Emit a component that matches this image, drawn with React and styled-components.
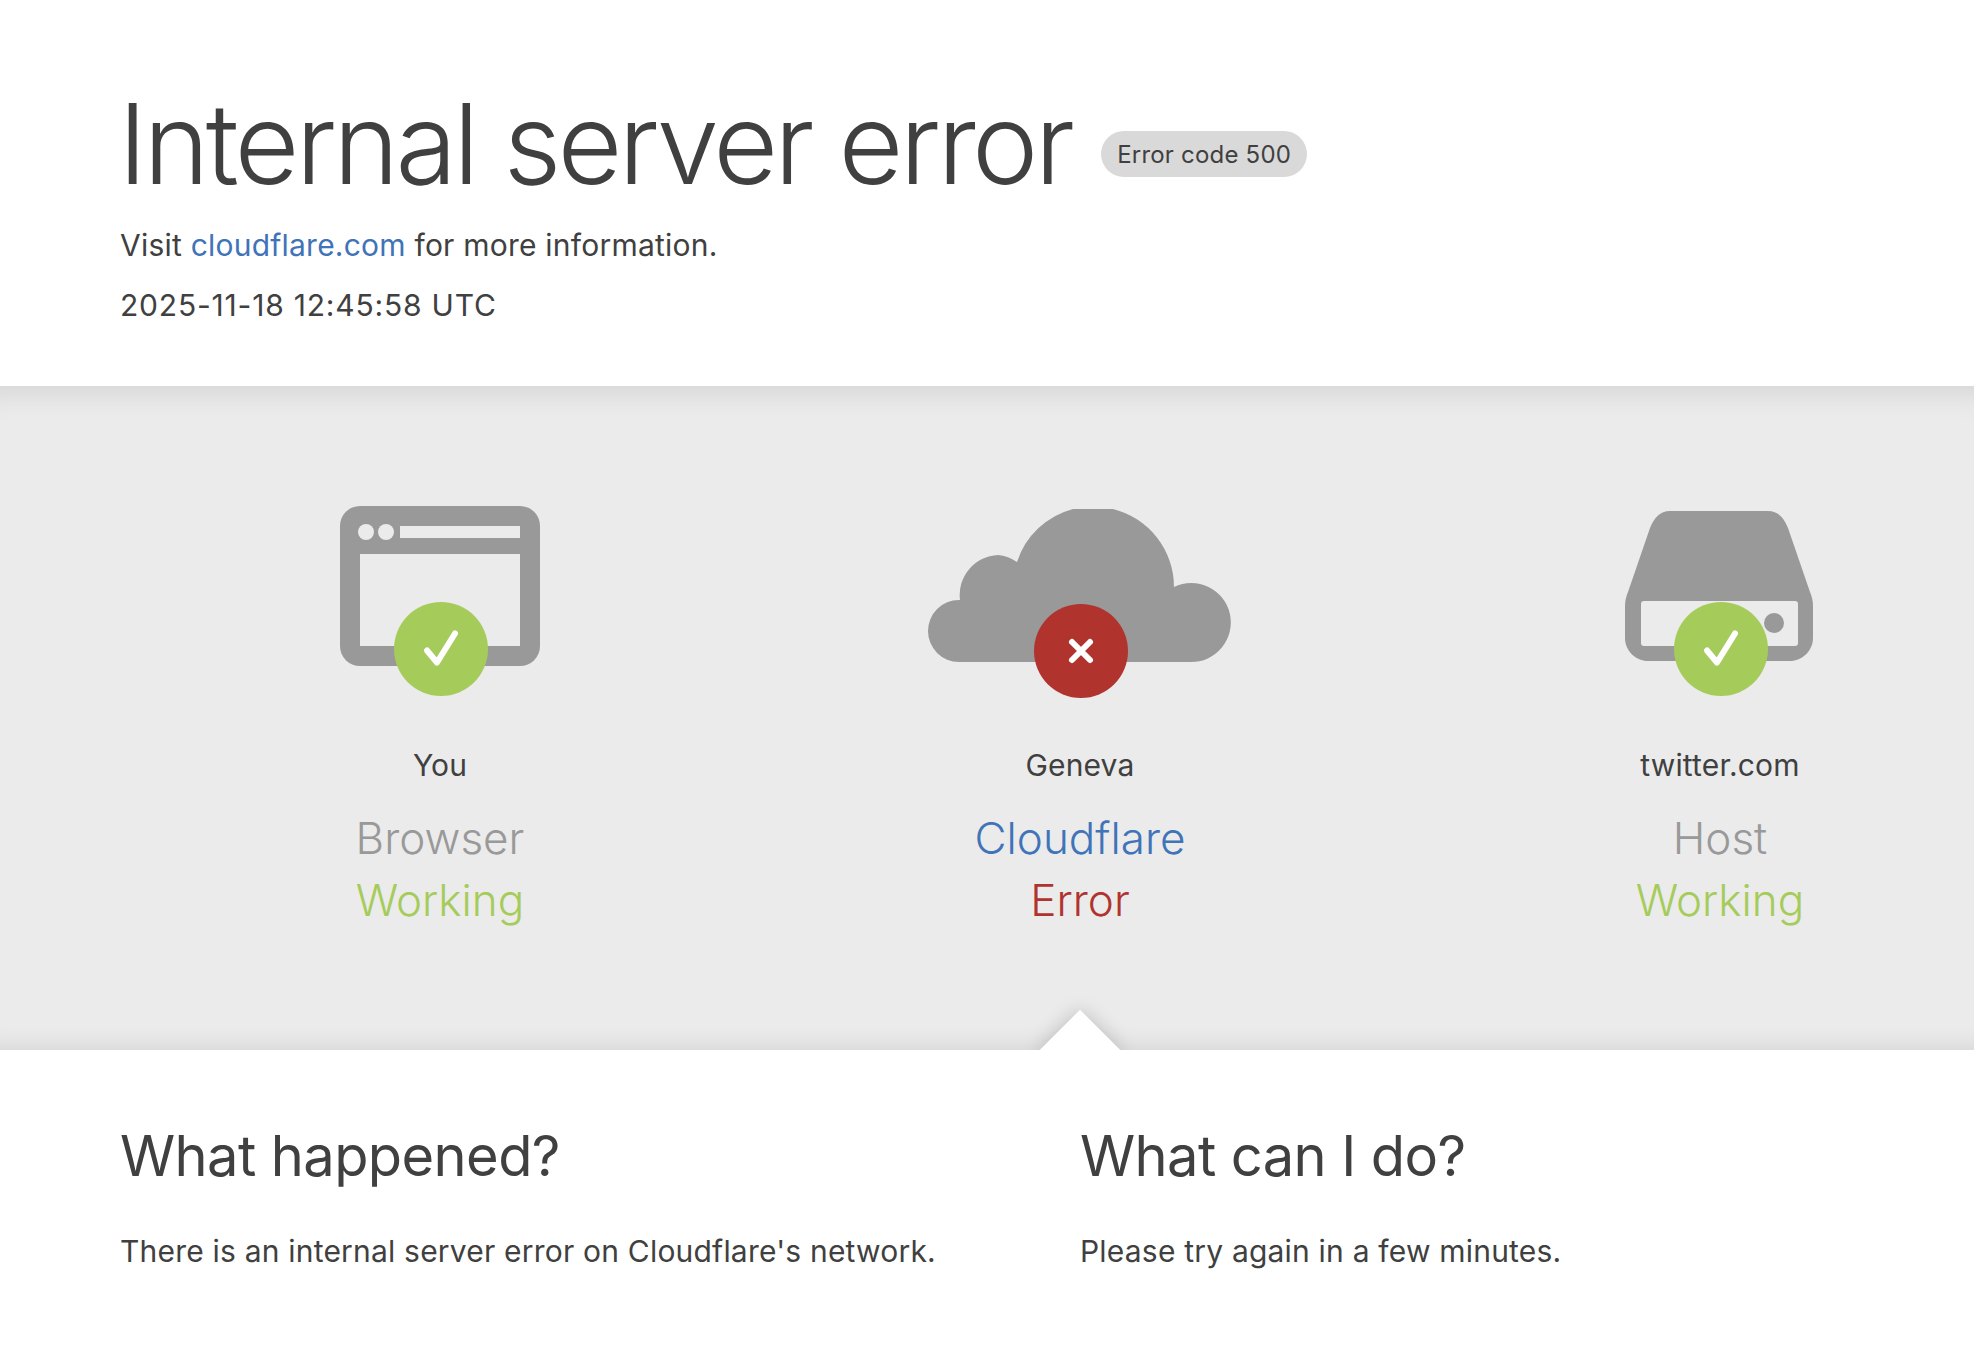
import React from "react";
import styled, { createGlobalStyle } from "styled-components";

const Global = createGlobalStyle`
  html, body { margin: 0; padding: 0; background: #fff; overflow-x: hidden; }
  body { font-family: Inter, "Noto Sans", "Liberation Sans", sans-serif; color: #404040; }
`;

const Page = styled.div`
  width: 1974px;
  height: 1360px;
  overflow: hidden;
`;

const Header = styled.header`
  height: 386px;
  box-sizing: border-box;
  padding: 83px 0 0 120px;
`;

const TitleRow = styled.div`
  display: flex;
  align-items: center;
  gap: 30px;
`;

const Title = styled.h1`
  margin: 0 0 0 -2px;
  font-size: 112px;
  line-height: 120px;
  font-weight: 300;
  letter-spacing: -3.75px;
`;

const Badge = styled.span`
  display: inline-flex;
  align-items: center;
  height: 46px;
  padding: 0 16px;
  margin-top: 22px;
  border-radius: 23px;
  background: #d9d9d9;
  font-size: 24px;
  letter-spacing: 0.2px;
`;

const Line = styled.p`
  margin: ${(p) => p.$top}px 0 0;
  font-size: 30px;
  line-height: 40px;
  font-weight: 400;
  letter-spacing: ${(p) => p.$spacing}px;
`;

const Link = styled.a`
  color: #4173b8;
  text-decoration: none;
`;

const Band = styled.section`
  position: relative;
  height: 664px;
  overflow: hidden;
  background: #ebebeb;
  box-shadow: inset 0 34px 34px -34px rgba(0, 0, 0, 0.14), inset 0 -26px 26px -26px rgba(0, 0, 0, 0.12);
  display: grid;
  grid-template-columns: repeat(3, 640px);
  padding-left: 120px;
  box-sizing: border-box;
`;

const Arrow = styled.div`
  position: absolute;
  left: 1080px;
  top: 664px;
  width: 57px;
  height: 57px;
  background: #fff;
  transform: translate(-50%, -50%) rotate(45deg);
  box-shadow: 0 0 20px rgba(0, 0, 0, 0.2);
`;

const Column = styled.div`
  display: flex;
  flex-direction: column;
  align-items: center;
  text-align: center;
`;

const IconWrap = styled.div`
  position: relative;
  width: 320px;
  height: 210px;
  margin-top: 110px;
`;

const Glyph = styled.svg`
  position: absolute;
  left: 0;
  top: 0;
  display: block;
`;

const Status = styled.div`
  position: absolute;
  left: 114px;
  top: ${(p) => p.$top}px;
  width: 94px;
  height: 94px;
  border-radius: 50%;
  background: ${(p) => p.$bg};
  display: flex;
  align-items: center;
  justify-content: center;
`;

const Place = styled.div`
  margin-top: 39px;
  font-size: 30px;
  line-height: 40px;
  letter-spacing: 0.15px;
`;

const Role = styled.div`
  margin-top: 22px;
  font-size: 44px;
  line-height: 62px;
  font-weight: 300;
  color: ${(p) => p.$color};
`;

const State = styled(Role)`
  margin-top: 0;
`;

const Bottom = styled.section`
  display: grid;
  grid-template-columns: repeat(2, 960px);
  padding: 76px 0 0 120px;
`;

const Heading = styled.h2`
  margin: 0;
  font-size: 56px;
  line-height: 60px;
  font-weight: 400;
  letter-spacing: -0.6px;
`;

const Body = styled.p`
  margin: 45px 0 0;
  font-size: 30px;
  line-height: 40px;
  letter-spacing: 0.2px;
`;

const GREY = "#999";
const BAND = "#ebebeb";
const GREEN = "#a5cc5a";
const RED = "#b0332d";
const BLUE = "#4173b8";

const Check = () => (
  <svg width="40" height="40" viewBox="0 0 40 40" fill="none">
    <path d="M6 21.5 L16 33.5 L34 4.5" stroke="#fff" strokeWidth="6" strokeLinecap="round" strokeLinejoin="round" />
  </svg>
);

const Cross = () => (
  <svg width="30" height="30" viewBox="0 0 30 30" fill="none">
    <path d="M6 6 L24 24 M24 6 L6 24" stroke="#fff" strokeWidth="6" strokeLinecap="round" />
  </svg>
);

/* Each icon's viewBox uses page coordinates, so the geometry reads straight off the reference. */
const BrowserIcon = () => (
  <Glyph width="320" height="210" viewBox="280 496 320 210">
    <rect x="340" y="506" width="200" height="160" rx="20" fill={GREY} />
    <rect x="360" y="554" width="160" height="92" fill={BAND} />
    <rect x="400" y="526" width="120" height="12" fill={BAND} />
    <circle cx="366" cy="532" r="8" fill={BAND} />
    <circle cx="386" cy="532" r="8" fill={BAND} />
  </Glyph>
);

const CloudIcon = () => (
  <Glyph width="320" height="210" viewBox="920 496 320 210">
    <path
      fill={GREY}
      d="M959 662 A31 31 0 0 1 959 600 L960 600 A40 40 0 0 1 998 555 A40 40 0 0 1 1017 562 A80.5 80.5 0 0 1 1073 509 L1113 509 A80.5 80.5 0 0 1 1174 587 A39.5 39.5 0 1 1 1190.5 662 Z"
    />
  </Glyph>
);

const ServerIcon = () => (
  <Glyph width="320" height="210" viewBox="1560 496 320 210">
    <path
      fill={GREY}
      d="M1670 511 L1768 511 C1778 511 1784 518 1788 528 L1810 592 C1812 597 1813 601 1813 606 L1813 638 C1813 651 1802 661 1790 661 L1648 661 C1636 661 1625 651 1625 638 L1625 606 C1625 601 1626 597 1628 592 L1650 528 C1654 518 1660 511 1670 511 Z"
    />
    <rect x="1641" y="601" width="157" height="45" rx="3" fill={BAND} />
    <circle cx="1774" cy="623" r="10" fill={GREY} />
  </Glyph>
);

const nodes = [
  { place: "You", role: "Browser", roleColor: GREY, state: "Working", stateColor: GREEN, Icon: BrowserIcon, bg: GREEN, top: 106, mark: <Check /> },
  { place: "Geneva", role: "Cloudflare", roleColor: BLUE, state: "Error", stateColor: RED, Icon: CloudIcon, bg: RED, top: 108, mark: <Cross /> },
  { place: "twitter.com", role: "Host", roleColor: GREY, state: "Working", stateColor: GREEN, Icon: ServerIcon, bg: GREEN, top: 106, mark: <Check /> },
];

export default function App() {
  return (
    <Page>
      <Global />
      <Header>
        <TitleRow>
          <Title>Internal server error</Title>
          <Badge>Error code 500</Badge>
        </TitleRow>
        <Line $top={22} $spacing={0.22}>
          Visit <Link href="#">cloudflare.com</Link> for more information.
        </Line>
        <Line $top={20} $spacing={0.8}>2025-11-18 12:45:58 UTC</Line>
      </Header>
      <Band>
        {nodes.map(({ place, role, roleColor, state, stateColor, Icon, bg, top, mark }) => (
          <Column key={place}>
            <IconWrap>
              <Icon />
              <Status $bg={bg} $top={top}>{mark}</Status>
            </IconWrap>
            <Place>{place}</Place>
            <Role $color={roleColor}>{role}</Role>
            <State $color={stateColor}>{state}</State>
          </Column>
        ))}
        <Arrow />
      </Band>
      <Bottom>
        <div>
          <Heading>What happened?</Heading>
          <Body>There is an internal server error on Cloudflare's network.</Body>
        </div>
        <div>
          <Heading>What can I do?</Heading>
          <Body>Please try again in a few minutes.</Body>
        </div>
      </Bottom>
    </Page>
  );
}
